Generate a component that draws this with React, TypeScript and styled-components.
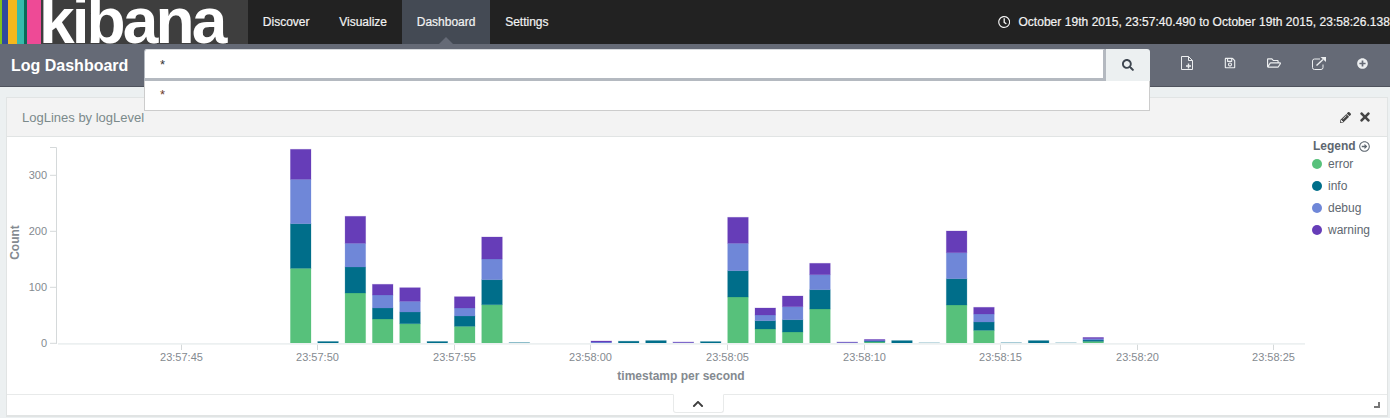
import React from 'react';
import styled, { createGlobalStyle } from 'styled-components';
import {
  FaChevronUp,
  FaPencilAlt,
  FaPlusCircle,
  FaRegArrowAltCircleRight,
  FaRegClock,
  FaRegFolderOpen,
  FaRegSave,
  FaSearch,
  FaTimes,
} from 'react-icons/fa';

const COLORS = ['#57c17b', '#006e8a', '#6f87d8', '#663db8'];
const LEGEND = ['error', 'info', 'debug', 'warning'];
const BASE = 343.5;
const BAR_X = 290.4;
const BAR_STEP = 27.33;

// y of the top of each stack part, [error, info, debug, warning], one entry per second
const BARS: (number[] | null)[] = [
  [268.3, 223.7, 179.3, 149.3],
  [BASE, 341.5, 341.5, 341.5],
  [293, 267, 243.3, 216.3],
  [319, 308, 295, 284.3],
  [323.7, 312, 301.3, 287.7],
  [BASE, 341.5, 341.5, 341.5],
  [326.3, 316, 308, 296.7],
  [304.7, 279.7, 259, 237],
  [BASE, 342.7, 342.7, 342.7],
  null,
  null,
  [BASE, BASE, 342, 341],
  [BASE, 341.2, 341.2, 341.2],
  [BASE, 340.6, 340.6, 340.6],
  [BASE, BASE, 342.5, 342],
  [BASE, 341.6, 341.6, 341.6],
  [297, 270.7, 243.3, 217.3],
  [329, 320.7, 315, 308],
  [332, 319.7, 306.7, 296],
  [309, 289.7, 274.7, 263.3],
  [BASE, BASE, 342.4, 342],
  [341.8, 341, 340.4, 339.4],
  [BASE, 340.6, 340.6, 340.6],
  [BASE, 342.9, 342.9, 342.9],
  [305, 278.7, 252.7, 231],
  [330.3, 322, 314, 307.3],
  [BASE, 342.8, 342.8, 342.8],
  [BASE, 340.6, 340.6, 340.6],
  [BASE, 342.9, 342.9, 342.9],
  [341.3, 340, 338.7, 337.4],
];

const Y_TICKS = [
  { y: 175.3, label: '300' },
  { y: 231.3, label: '200' },
  { y: 287.3, label: '100' },
  { y: 343.3, label: '0' },
];

const X_TICKS = [
  { x: 181.5, label: '23:57:45' },
  { x: 317.5, label: '23:57:50' },
  { x: 454.5, label: '23:57:55' },
  { x: 590.5, label: '23:58:00' },
  { x: 727.5, label: '23:58:05' },
  { x: 864.5, label: '23:58:10' },
  { x: 1000.5, label: '23:58:15' },
  { x: 1137.5, label: '23:58:20' },
  { x: 1273.5, label: '23:58:25' },
];

const STRIPES = [
  { width: 2, color: '#7fc31c' },
  { width: 6, color: '#2f4a9c' },
  { width: 9, color: '#f5b81c' },
  { width: 7, color: '#36bbad' },
  { width: 3, color: '#0b6b58' },
  { width: 14, color: '#ee4a96' },
];

const NewFileIcon = () => (
  <svg width="12" height="14" viewBox="0 0 12 14" fill="none" stroke="currentColor">
    <path d="M.5.5h7l4 4v9h-11z" />
    <path d="M7.5.5v4h4" />
    <path d="M7.5 7.5v5M5 10h5" strokeWidth="1.4" />
  </svg>
);

const ShareIcon = () => (
  <svg width="14" height="13" viewBox="0 0 14 13" fill="none" stroke="currentColor">
    <path d="M8 2H2.5a2 2 0 0 0-2 2v6.5a2 2 0 0 0 2 2H9a2 2 0 0 0 2-2V7.5" />
    <path d="M4.5 8.5L11 2.5" strokeWidth="1.4" />
    <path d="M8.5 0H14v5z" fill="currentColor" stroke="none" />
  </svg>
);

const Chart = () => (
  <ChartSvg viewBox="7 137 1304 257">
    <path d="M50 147.5h6.5v196" fill="none" stroke="#d5d9da" />
    {Y_TICKS.map((t) => (
      <g key={t.label}>
        <path d={`M50 ${t.y}h7`} stroke="#d5d9da" />
        <TickLabel x={47} y={t.y + 4} textAnchor="end">
          {t.label}
        </TickLabel>
      </g>
    ))}
    {X_TICKS.map((t) => (
      <g key={t.label}>
        <path d={`M${t.x} 344v6`} stroke="#d5d9da" />
        <TickLabel x={t.x} y={361} textAnchor="middle">
          {t.label}
        </TickLabel>
      </g>
    ))}
    {BARS.map((tops, i) =>
      tops
        ? tops.map((top, part) => {
            const bottom = part === 0 ? BASE : tops[part - 1];
            if (bottom - top <= 0) return null;
            return (
              <rect
                key={`${i}-${part}`}
                x={BAR_X + i * BAR_STEP}
                y={top}
                width={20.6}
                height={bottom - top}
                fill={COLORS[part]}
                stroke={COLORS[part]}
                strokeOpacity={0.3}
                strokeWidth={0.8}
              />
            );
          })
        : null,
    )}
    <path d="M58 343.9h1247" stroke="#ecf0f1" strokeWidth="1.6" />
    <AxisTitle transform="translate(18.5 242.5) rotate(-90)" textAnchor="middle">
      Count
    </AxisTitle>
    <AxisTitle x={681} y={380} textAnchor="middle">
      timestamp per second
    </AxisTitle>
  </ChartSvg>
);

const App = () => (
  <>
    <GlobalStyle />
    <NavBar>
      <Logo>
        {STRIPES.map((s) => (
          <Stripe key={s.color} $width={s.width} $color={s.color} />
        ))}
        <LogoText>kibana</LogoText>
      </Logo>
      <NavItem>Discover</NavItem>
      <NavItem>Visualize</NavItem>
      <NavItem $active>Dashboard</NavItem>
      <NavItem>Settings</NavItem>
      <TimeRange>
        <FaRegClock size={14} />
        <span>October 19th 2015, 23:57:40.490 to October 19th 2015, 23:58:26.138</span>
      </TimeRange>
    </NavBar>
    <DashBar>
      <DashTitle>Log Dashboard</DashTitle>
      <SearchForm>
        <SearchInput readOnly value="*" />
        <SearchButton>
          <FaSearch size={12} />
        </SearchButton>
        <Suggestions>*</Suggestions>
      </SearchForm>
      <DashActions>
        <DashAction>
          <NewFileIcon />
        </DashAction>
        <DashAction>
          <FaRegSave size={12} />
        </DashAction>
        <DashAction>
          <FaRegFolderOpen size={14} />
        </DashAction>
        <DashAction>
          <ShareIcon />
        </DashAction>
        <DashAction>
          <FaPlusCircle size={11} />
        </DashAction>
      </DashActions>
    </DashBar>
    <Panel>
      <PanelHeader>
        <PanelTitle>LogLines by logLevel</PanelTitle>
        <PanelTools>
          <FaPencilAlt size={11} />
          <FaTimes size={14} />
        </PanelTools>
      </PanelHeader>
      <PanelBody>
        <Chart />
        <Legend>
          <LegendTitle>
            Legend <FaRegArrowAltCircleRight size={11} />
          </LegendTitle>
          {LEGEND.map((name, i) => (
            <LegendItem key={name}>
              <LegendDot $color={COLORS[i]} />
              {name}
            </LegendItem>
          ))}
        </Legend>
      </PanelBody>
      <PanelFooter>
        <CollapseTab>
          <FaChevronUp size={12} />
        </CollapseTab>
        <ResizeHandle />
      </PanelFooter>
    </Panel>
  </>
);

const GlobalStyle = createGlobalStyle`
  html, body {
    margin: 0;
    height: 418px;
    overflow: hidden;
    background: #ecf0f1;
    font-family: "Liberation Sans", Arial, sans-serif;
  }
`;

const NavBar = styled.div`
  display: flex;
  height: 44px;
  background: #222;
  overflow: hidden;
`;

const Logo = styled.div`
  display: flex;
  flex: 0 0 248px;
  align-items: flex-end;
  background: #3e3e3e;
`;

const Stripe = styled.div<{ $width: number; $color: string }>`
  align-self: stretch;
  width: ${({ $width }) => $width}px;
  background: ${({ $color }) => $color};
`;

const LogoText = styled.div`
  margin: 0 0 -9px -2px;
  font-size: 64px;
  line-height: 64px;
  font-weight: 700;
  letter-spacing: -2.9px;
  color: #fff;
`;

const NavItem = styled.div<{ $active?: boolean }>`
  position: relative;
  display: flex;
  align-items: center;
  padding: 0 14.85px;
  font-size: 12px;
  color: #f2f2f2;
  -webkit-text-stroke: 0.2px #f2f2f2;
  background: ${({ $active }) => ($active ? '#444a54' : 'transparent')};

  &::after {
    content: '';
    display: ${({ $active }) => ($active ? 'block' : 'none')};
    position: absolute;
    left: 50%;
    bottom: 0;
    margin-left: -7px;
    border: 7px solid transparent;
    border-top: 0;
    border-bottom-color: #656a76;
  }
`;

const TimeRange = styled.div`
  display: flex;
  align-items: center;
  flex: none;
  gap: 8px;
  margin-left: auto;
  width: 392px;
  font-size: 12px;
  letter-spacing: 0.04px;
  white-space: nowrap;
  color: #f2f2f2;
  -webkit-text-stroke: 0.2px #f2f2f2;
`;

const DashBar = styled.div`
  display: flex;
  align-items: flex-start;
  height: 42px;
  background: #656a76;
  border-bottom: 1px solid #4f535d;
`;

const DashTitle = styled.div`
  flex: 0 0 133px;
  padding: 12px 0 0 11px;
  font-size: 16px;
  line-height: 19px;
  font-weight: 700;
  color: #fff;
`;

const SearchForm = styled.div`
  position: relative;
  z-index: 2;
  display: flex;
  flex: 0 0 1006px;
  height: 32px;
  margin-top: 5px;
`;

const SearchInput = styled.input`
  flex: 1;
  min-width: 0;
  box-sizing: border-box;
  padding: 0 15px;
  border: 0;
  border-top: 1px solid #d9dcdf;
  border-left: 1px solid #b4b9c0;
  border-right: 3px solid #b4b9c0;
  border-bottom: 3px solid #b4b9c0;
  border-radius: 3px 0 0 0;
  outline: 0;
  font-family: inherit;
  font-size: 13px;
  color: #333;
`;

const SearchButton = styled.div`
  display: flex;
  align-items: center;
  justify-content: center;
  flex: 0 0 44px;
  background: #ecf0f1;
  border-radius: 0 3px 0 0;
  color: #3e4650;
`;

const Suggestions = styled.div`
  position: absolute;
  top: 100%;
  left: 0;
  right: 0;
  box-sizing: border-box;
  height: 30px;
  padding: 4px 15px;
  background: #fff;
  border: 1px solid #ccc;
  border-top: 0;
  font-size: 13px;
  line-height: 19px;
  color: #6b3a2a;
`;

const DashActions = styled.div`
  display: flex;
  flex: 1;
  padding-left: 15.5px;
`;

const DashAction = styled.div`
  display: flex;
  align-items: center;
  justify-content: center;
  flex: none;
  height: 38px;
  padding: 0 15.5px;
  color: #eceef0;
`;

const Panel = styled.div`
  display: flex;
  flex-direction: column;
  box-sizing: border-box;
  height: 320px;
  margin: 10px 2px 0 6px;
  background: #fff;
  border: 1px solid #e1e4e4;
  border-width: 1px 1px 2px;
`;

const PanelHeader = styled.div`
  display: flex;
  align-items: center;
  justify-content: space-between;
  flex: none;
  height: 38px;
  padding: 0 15px 0 15px;
  background: #f3f3f3;
  border-bottom: 1px solid #e1e4e4;
`;

const PanelTitle = styled.div`
  font-size: 13px;
  color: #7b8a8b;
`;

const PanelTools = styled.div`
  display: flex;
  align-items: center;
  gap: 7px;
  color: #444;
`;

const PanelBody = styled.div`
  display: flex;
  flex: 1;
  min-height: 0;
`;

const ChartSvg = styled.svg`
  display: block;
  flex: 0 0 1304px;
  height: 257px;
`;

const TickLabel = styled.text`
  font-size: 11px;
  fill: #848a90;
`;

const AxisTitle = styled.text`
  font-size: 12px;
  font-weight: 700;
  fill: #848a90;
`;

const Legend = styled.div`
  flex: 1;
  padding-top: 2px;
  font-size: 12px;
  color: #5e6770;
`;

const LegendTitle = styled.div`
  display: flex;
  align-items: center;
  gap: 3px;
  height: 14px;
  margin-left: 2px;
  font-weight: 700;
  color: #5e6770;
`;

const LegendItem = styled.div`
  display: flex;
  align-items: center;
  gap: 6px;
  height: 22px;
  margin-left: 1px;

  &:first-of-type {
    margin-top: 5px;
  }
`;

const LegendDot = styled.span<{ $color: string }>`
  flex: none;
  width: 10px;
  height: 10px;
  border-radius: 50%;
  background: ${({ $color }) => $color};
`;

const PanelFooter = styled.div`
  position: relative;
  display: flex;
  justify-content: center;
  flex: 0 0 20px;
  border-top: 1px solid #e8eaea;
`;

const CollapseTab = styled.div`
  display: flex;
  align-items: center;
  justify-content: center;
  width: 49px;
  height: 17px;
  margin: -1px 0 0 2px;
  background: #fff;
  border: 1px solid #e8eaea;
  border-top-color: #fff;
  border-radius: 0 0 3px 3px;
  color: #3e3e3e;
`;

const ResizeHandle = styled.div`
  position: absolute;
  right: 7px;
  bottom: 7px;
  width: 6px;
  height: 6px;
  border-right: 2px solid #777;
  border-bottom: 2px solid #777;
  box-sizing: border-box;
`;

export default App;
